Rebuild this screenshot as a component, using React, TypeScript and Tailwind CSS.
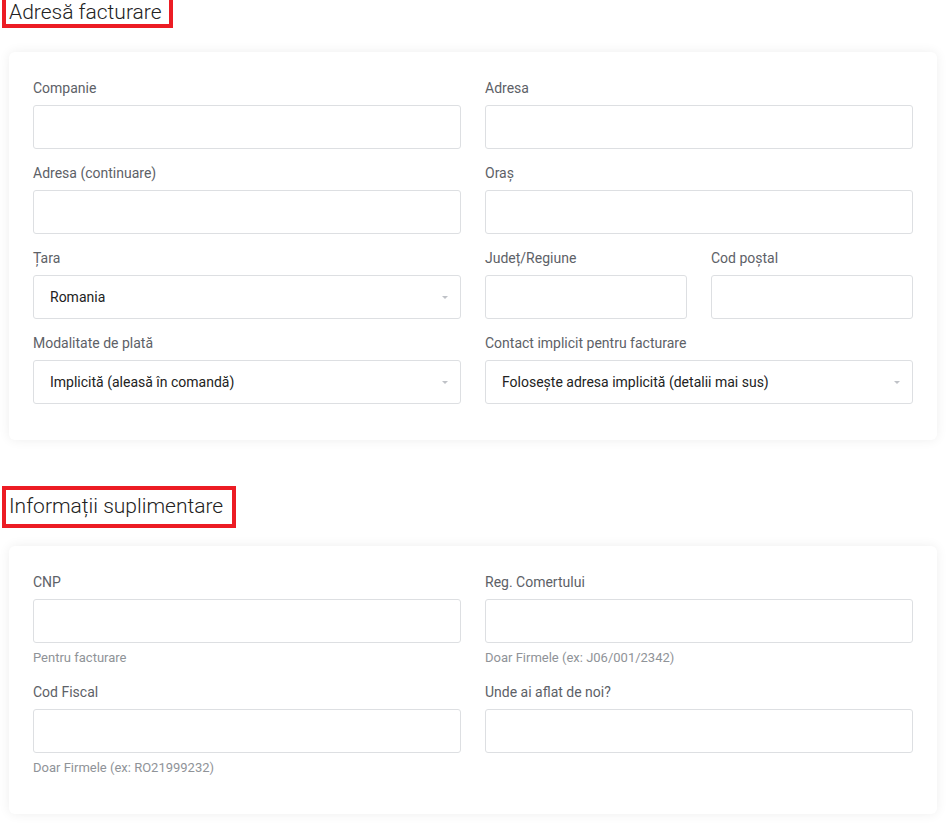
import React from 'react'

function Label({ children }: { children: React.ReactNode }) {
  return <div className="text-sm leading-5 text-[#5d6167] mb-[7px]">{children}</div>
}

function Helper({ children }: { children: React.ReactNode }) {
  return <div className="mt-[7px] pb-[2px] text-[13px] leading-4 text-[#8f9398]">{children}</div>
}

function TextField({ label, helper }: { label: string; helper?: string }) {
  return (
    <div>
      <Label>{label}</Label>
      <input className="block w-full h-[44px] rounded-[3px] border border-[#dddfe2] bg-white px-4 text-sm text-[#222] outline-none" />
      {helper && <Helper>{helper}</Helper>}
    </div>
  )
}

function SelectField({ label, value }: { label: string; value: string }) {
  return (
    <div>
      <Label>{label}</Label>
      <div className="flex items-center justify-between h-[44px] rounded-[3px] border border-[#dddfe2] bg-white pl-4 pr-[12px]">
        <span className="text-sm text-[#222]">{value}</span>
        <svg width="6" height="3" viewBox="0 0 6 3">
          <polygon points="0,0 6,0 3,3" fill="#bfc2c7" />
        </svg>
      </div>
    </div>
  )
}

function SectionTitle({ title, box }: { title: string; box: string }) {
  return (
    <h2 className="relative w-fit text-[21px] leading-6 font-light text-[#222]">
      {title}
      {/* annotation outline */}
      <span className={`absolute border-4 border-[#ec1c24] pointer-events-none ${box}`} />
    </h2>
  )
}

export default function App() {
  return (
    <div className="min-h-screen bg-white pl-[9px] pr-[14px] font-['Roboto',sans-serif] overflow-hidden">
      <SectionTitle title="Adresă facturare" box="-left-[7px] -right-[11px] -top-[14px] -bottom-[4px]" />

      <div className="mt-[28px] rounded-md bg-white px-6 pt-[26px] pb-9 shadow-[0_0_12px_rgba(0,0,0,0.07)]">
        <div className="grid grid-cols-2 gap-x-6 gap-y-[14px]">
          <TextField label="Companie" />
          <TextField label="Adresa" />
          <TextField label="Adresa (continuare)" />
          <TextField label="Oraș" />
          <SelectField label="Țara" value="Romania" />
          <div className="grid grid-cols-2 gap-x-6">
            <TextField label="Județ/Regiune" />
            <TextField label="Cod poștal" />
          </div>
          <SelectField label="Modalitate de plată" value="Implicită (aleasă în comandă)" />
          <SelectField label="Contact implicit pentru facturare" value="Folosește adresa implicită (detalii mai sus)" />
        </div>
      </div>

      <div className="mt-[54px]">
        <SectionTitle title="Informații suplimentare" box="-left-[7px] -right-[13px] -top-[8px] -bottom-[10px]" />
      </div>

      <div className="mt-[28px] rounded-md bg-white px-6 pt-[26px] pb-9 shadow-[0_0_12px_rgba(0,0,0,0.07)]">
        <div className="grid grid-cols-2 gap-x-6 gap-y-[14px]">
          <TextField label="CNP" helper="Pentru facturare" />
          <TextField label="Reg. Comertului" helper="Doar Firmele (ex: J06/001/2342)" />
          <TextField label="Cod Fiscal" helper="Doar Firmele (ex: RO21999232)" />
          <TextField label="Unde ai aflat de noi?" />
        </div>
      </div>
      <div className="h-10" />
    </div>
  )
}
